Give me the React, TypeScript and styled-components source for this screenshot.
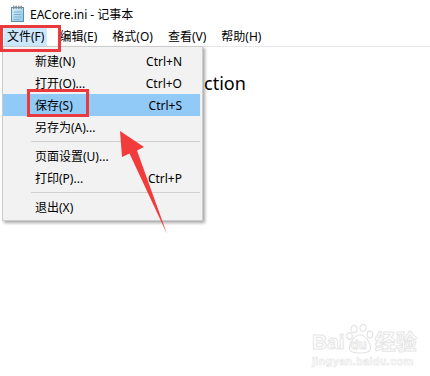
import styled, { createGlobalStyle } from 'styled-components';

const GlobalStyle = createGlobalStyle`
  html, body {
    margin: 0;
    padding: 0;
    background: #ffffff;
  }
  body {
    font-family: "Noto Sans", "Noto Sans CJK SC", sans-serif;
  }
`;

const uiFont = `"Noto Sans", "Noto Sans CJK SC", sans-serif`;

const Window = styled.div`
  position: relative;
  width: 430px;
  height: 376px;
  background: #ffffff;
  overflow: hidden;
`;

const TitleBar = styled.div`
  height: 27px;
  display: flex;
  align-items: center;
  gap: 5px;
  padding-left: 10px;
  box-sizing: border-box;
`;

const Title = styled.span`
  font-family: ${uiFont};
  font-size: 12px;
  color: #000;
  padding-top: 1px;
`;

const MenuBar = styled.div`
  height: 20px;
  display: flex;
  gap: 9px;
  padding-left: 4px;
  box-sizing: border-box;
  border-bottom: 1px solid #e8e8e8;
`;

const MenuItem = styled.div<{ $active?: boolean }>`
  padding: 0 3px;
  height: 19px;
  line-height: 19px;
  font-family: ${uiFont};
  font-size: 12px;
  color: #000;
  background: ${(p) => (p.$active ? '#cce8ff' : 'transparent')};
`;

const Editor = styled.div`
  padding: 24px 0 0 204px;
  font-family: ${uiFont};
  font-size: 18px;
  color: #000;
  line-height: 24px;
`;

const Dropdown = styled.div`
  position: absolute;
  top: 46px;
  left: 2px;
  width: 201px;
  box-sizing: border-box;
  padding: 3px 2px 2px 0;
  background: #f2f2f2;
  border: 1px solid #cccccc;
  box-shadow: 2px 2px 3px rgba(0, 0, 0, 0.35);
`;

const Row = styled.div<{ $hot?: boolean }>`
  height: 22px;
  display: grid;
  grid-template-columns: 1fr auto;
  align-items: center;
  padding: 0 18px 0 32px;
  font-family: ${uiFont};
  font-size: 12px;
  color: #000;
  background: ${(p) => (p.$hot ? '#91c9f7' : 'transparent')};
`;

const Separator = styled.div`
  height: 7px;
  display: flex;
  align-items: center;
  margin-left: 28px;
  &::after {
    content: '';
    flex: 1;
    height: 1px;
    background: #d0d0d0;
  }
`;

const MarkBox = styled.div<{ $x: number; $y: number; $w: number; $h: number }>`
  position: absolute;
  left: ${(p) => p.$x}px;
  top: ${(p) => p.$y}px;
  width: ${(p) => p.$w}px;
  height: ${(p) => p.$h}px;
  box-sizing: border-box;
  border: 3px solid #ea3a3d;
`;

const ArrowLayer = styled.svg`
  position: absolute;
  left: 0;
  top: 0;
  pointer-events: none;
`;

const Watermark = styled.div`
  position: absolute;
  left: 312px;
  top: 322px;
  display: flex;
  flex-direction: column;
  align-items: flex-start;
  color: #ffffff;
  -webkit-text-stroke: 1px #e6e6e6;
  font-family: "Liberation Sans", "Noto Sans CJK SC", sans-serif;
  font-weight: bold;
`;

const LogoLine = styled.div`
  display: flex;
  align-items: flex-end;
  font-size: 21px;
  line-height: 24px;
  height: 32px;
`;

const Paw = styled.div`
  position: relative;
  width: 28px;
  height: 30px;
  margin: 0 1px;
`;

const PawText = styled.span`
  position: absolute;
  left: 5px;
  bottom: 3px;
  font-size: 13px;
  line-height: 13px;
`;

const SiteLine = styled.div`
  font-size: 11px;
  line-height: 13px;
  margin-top: 1px;
  letter-spacing: 0.3px;
  -webkit-text-stroke: 0.6px #e6e6e6;
`;

function NotepadIcon() {
  return (
    <svg width="15" height="17" viewBox="0 0 15 17">
      <defs>
        <linearGradient id="pad" x1="0" y1="0" x2="1" y2="1">
          <stop offset="0" stopColor="#dff1fb" />
          <stop offset="1" stopColor="#8cc7e8" />
        </linearGradient>
      </defs>
      <rect x="1.5" y="2.5" width="12" height="14" fill="url(#pad)" stroke="#5b8fae" />
      <line x1="3.5" y1="7" x2="11.5" y2="7" stroke="#7fb1cf" />
      <line x1="3.5" y1="9.5" x2="11.5" y2="9.5" stroke="#7fb1cf" />
      <line x1="3.5" y1="12" x2="11.5" y2="12" stroke="#7fb1cf" />
      <line x1="3.5" y1="14.5" x2="9.5" y2="14.5" stroke="#7fb1cf" />
      {[3, 5.5, 8, 10.5].map((x) => (
        <rect key={x} x={x} y="0.5" width="1.4" height="3.6" rx="0.7" fill="#8a8a8a" />
      ))}
    </svg>
  );
}

const menus = ['文件(F)', '编辑(E)', '格式(O)', '查看(V)', '帮助(H)'];

type Entry =
  | { label: string; key?: string; hot?: boolean }
  | { sep: true };

const entries: Entry[] = [
  { label: '新建(N)', key: 'Ctrl+N' },
  { label: '打开(O)...', key: 'Ctrl+O' },
  { label: '保存(S)', key: 'Ctrl+S', hot: true },
  { label: '另存为(A)...' },
  { sep: true },
  { label: '页面设置(U)...' },
  { label: '打印(P)...', key: 'Ctrl+P' },
  { sep: true },
  { label: '退出(X)' },
];

export default function App() {
  return (
    <Window>
      <GlobalStyle />
      <TitleBar>
        <NotepadIcon />
        <Title>EACore.ini - 记事本</Title>
      </TitleBar>
      <MenuBar>
        {menus.map((m, i) => (
          <MenuItem key={m} $active={i === 0}>
            {m}
          </MenuItem>
        ))}
      </MenuBar>
      <Editor>ction</Editor>

      <Dropdown>
        {entries.map((e, i) =>
          'sep' in e ? (
            <Separator key={i} />
          ) : (
            <Row key={i} $hot={e.hot}>
              <span>{e.label}</span>
              <span>{e.key}</span>
            </Row>
          )
        )}
      </Dropdown>

      <MarkBox $x={0} $y={25} $w={61} $h={27} />
      <MarkBox $x={27} $y={89} $w={62} $h={28} />

      <ArrowLayer width="430" height="376">
        <polygon
          points="120,131 144,147 137,150.5 167,234 129.5,153.5 122,157"
          fill="#f23b3b"
        />
      </ArrowLayer>

      <Watermark>
        <LogoLine>
          <span>Bai</span>
          <Paw>
            <svg width="28" height="30" viewBox="0 0 28 30">
              <g fill="#ffffff" stroke="#e4e4e4" strokeWidth="1.2">
                <ellipse cx="8" cy="5" rx="3" ry="3.6" />
                <ellipse cx="17" cy="3.8" rx="3" ry="3.5" />
                <ellipse cx="3.5" cy="12" rx="2.8" ry="3.3" />
                <ellipse cx="24" cy="10.5" rx="2.8" ry="3.3" />
                <path d="M14 11 C 8 11, 2 21, 4 26 C 6 30, 22 30, 24 26 C 26 21, 20 11, 14 11 Z" />
              </g>
            </svg>
            <PawText>du</PawText>
          </Paw>
          <span>经验</span>
        </LogoLine>
        <SiteLine>jingyan.baidu.com</SiteLine>
      </Watermark>
    </Window>
  );
}
